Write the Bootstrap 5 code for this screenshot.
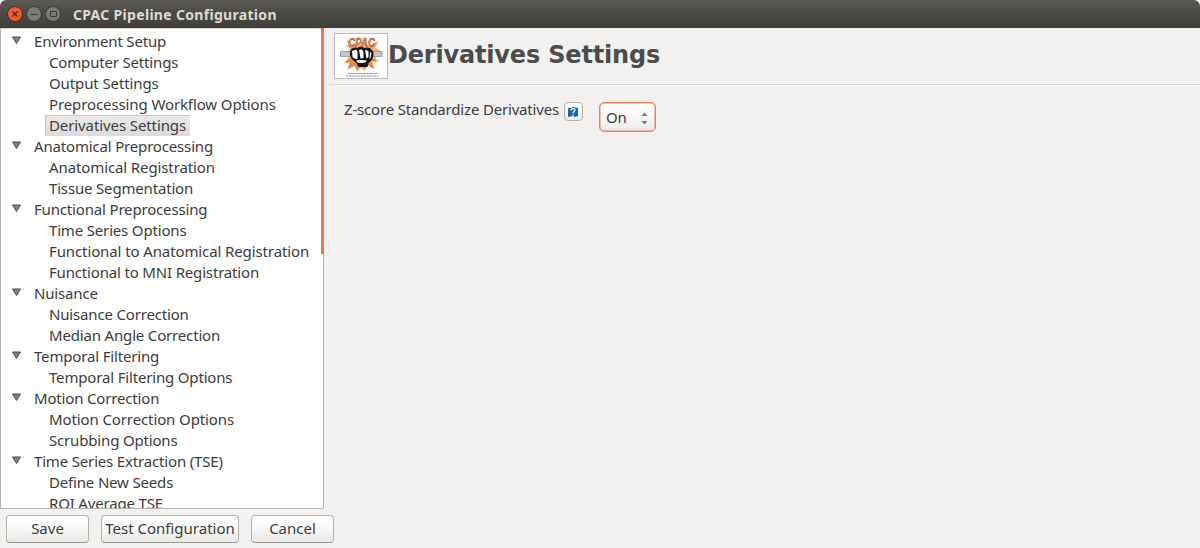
<!DOCTYPE html>
<html lang="en">
<head>
<meta charset="utf-8">
<title>CPAC Pipeline Configuration</title>
<link href="https://cdn.jsdelivr.net/npm/bootstrap@5.3.0/dist/css/bootstrap.min.css" rel="stylesheet">
<style>
body{font:15px/21px "Noto Sans","Open Sans",sans-serif;color:#3c3c3c;background:#f2f1f0;height:548px;letter-spacing:-.17px}
.titlebar{height:28px;padding-left:7px;background:linear-gradient(#5c5a54,#504e48 35%,#3f3e39);border-radius:6px 6px 0 0;color:#dfdbd2;font-weight:700;font-size:14px;letter-spacing:.31px}
.frame-top{background:#fff}
.titlebar svg{margin-right:3px}
.titlebar span{margin-left:9px;line-height:28px;padding-top:1px}
.sidebar{width:324px;height:481px;background:#fff;border:1px solid #b9b5b0;border-top-color:#d8d5d1;padding-top:2px;overflow:hidden}
.group,.leaf{height:21px;white-space:nowrap}
.group{padding-left:11px}
.group svg{margin-right:12px;margin-top:-4px}
.leaf{padding-left:44px}
.leaf span{display:inline-block;height:21px;padding:0 4px}
.leaf .selected{background:linear-gradient(#ebeae8,#dddbd9);box-shadow:inset 1px 1px #cbc9c6;letter-spacing:-.1px}
.leaf .loose{letter-spacing:-.11px}
.scroll-thumb{width:3px;height:226px;background:#f07746}
.sidebar-wrap{height:481px}
.heading{height:57px;margin-left:5px;padding:0 0 0 5px;border-bottom:1px solid #d9d7d5;box-shadow:0 1px #f9f8f7}
.heading h1{font:bold 24px/28px "DejaVu Sans",sans-serif;letter-spacing:-.18px;color:#4c4c4c;margin:0 0 2px}
.setting{padding:17px 0 0 20px}
.setting label{height:21px;margin-top:-3px;letter-spacing:-.18px}
.help{width:19px;height:19px;border:1px solid #b3afab;border-radius:4px;background:linear-gradient(#fff,#efeeed);margin:0 16px 0 5px}
.choice{width:57px;height:30px;border:1.5px solid #ea8358;border-radius:5px;background:linear-gradient(#fff,#f7f6f6 60%,#eae9e8);padding:0 7px 0 6px;box-shadow:inset 0 0 0 .5px #ea8358}
.choice svg{margin-top:3px}
.footer-bar{height:39px;padding:6px 0 0 6px;gap:12px}
.footer-bar .btn{--bs-btn-color:#3c3c3c;height:28px;padding:0 0 2px;border:1px solid #b5b1ad;border-bottom-color:#9c9894;border-radius:4px;background:linear-gradient(#fff,#f8f8f7 50%,#eae8e7);font-size:15px;line-height:24px}
.w-save{width:83px}.w-test{width:138px}
</style>
</head>
<body class="overflow-hidden">
<div class="frame-top"><header class="titlebar d-flex align-items-center">
<svg width="16" height="16" viewBox="0 0 16 16"><circle cx="8" cy="8" r="7.5" fill="#ed5d2f" stroke="#35342f"/><path d="M5.500 5.500l5 5m0-5l-5 5" stroke="#46271b" stroke-width="1.2"/></svg>
<svg width="16" height="16" viewBox="0 0 16 16"><circle cx="8" cy="8" r="7.5" fill="#7c7a73" stroke="#383732"/><path d="M4.500 8.500h7" stroke="#393832"/></svg>
<svg width="16" height="16" viewBox="0 0 16 16"><circle cx="8" cy="8" r="7.5" fill="#7c7a73" stroke="#383732"/><path d="M5.500 5.500h6v5h-6z" fill="none" stroke="#393832"/></svg>
<span>CPAC Pipeline Configuration</span>
</header></div>
<svg class="d-none"><defs><g id="open"><path d="M.5 1h8l-4 6.500z" fill="#818181" stroke="#4b4b4b"/></g></defs></svg>
<div class="d-flex">
<div class="sidebar-wrap position-relative flex-shrink-0">
<nav class="sidebar">
<div class="group"><svg width="10" height="9"><use href="#open"/></svg>Environment Setup</div>
<div class="leaf"><span>Computer Settings</span></div>
<div class="leaf"><span class="loose">Output Settings</span></div>
<div class="leaf"><span class="loose">Preprocessing Workflow Options</span></div>
<div class="leaf"><span class="selected">Derivatives Settings</span></div>
<div class="group"><svg width="10" height="9"><use href="#open"/></svg>Anatomical Preprocessing</div>
<div class="leaf"><span class="loose">Anatomical Registration</span></div>
<div class="leaf"><span>Tissue Segmentation</span></div>
<div class="group"><svg width="10" height="9"><use href="#open"/></svg>Functional Preprocessing</div>
<div class="leaf"><span>Time Series Options</span></div>
<div class="leaf"><span class="loose">Functional to Anatomical Registration</span></div>
<div class="leaf"><span>Functional to MNI Registration</span></div>
<div class="group"><svg width="10" height="9"><use href="#open"/></svg>Nuisance</div>
<div class="leaf"><span>Nuisance Correction</span></div>
<div class="leaf"><span>Median Angle Correction</span></div>
<div class="group"><svg width="10" height="9"><use href="#open"/></svg>Temporal Filtering</div>
<div class="leaf"><span>Temporal Filtering Options</span></div>
<div class="group"><svg width="10" height="9"><use href="#open"/></svg>Motion Correction</div>
<div class="leaf"><span class="loose">Motion Correction Options</span></div>
<div class="leaf"><span>Scrubbing Options</span></div>
<div class="group"><svg width="10" height="9"><use href="#open"/></svg>Time Series Extraction (TSE)</div>
<div class="leaf"><span>Define New Seeds</span></div>
<div class="leaf"><span>ROI Average TSE</span></div>
</nav>
<div class="scroll-thumb position-absolute top-0 end-0"></div>
</div>
<main class="flex-grow-1">
<div class="heading d-flex align-items-center">
<svg width="54" height="46" viewBox="0 0 54 46"><path d="M.5.5h53v45H.5z" fill="#fff" stroke="#b9b9b9"/>
<path d="M13 7l6 5h18l8-5-4 8 5 2-5 7 4 5-7-1 3 8-8-4-2 6-4-3-4 4-2-6-8 4 3-8-6 1 5-6-5-4 6-3z" fill="#f6b27c"/>
<path d="M12 12l6 4M42 9l-5 6M16 26l-4 3 5 0-2 6 6-4 2 5 3-5M37 25l5 3-6 0 3 7-7-5-1 5-3-4" fill="#ee8a48" stroke="#d9692f" stroke-width=".7"/>
<path d="M6.500 18.500h12v5h-12zM37 18.500h11v5H37z" fill="#c2c5c7" stroke="#888" stroke-width=".7"/>
<path d="M16.500 17c2-3 5-3 7-2 3-2 5-1 7 0 3-1 6-1 7 2 3 1 2 6 1 9l-4 4-1 4h-9l-2-4-5-4c-2-3-2-7-1-9z" fill="#151515"/>
<path d="M18 18l4-1.500 1.500 2v7l-2 .5-3-2zM25 17l3-.5 1.500 2.500v6l-3 .5zM31 17l3.500 1v6l-2 1.500zM36 19l1.500 1-1 5-1 1z" fill="#fff"/>
<path d="M22 27.500l5-.5 6 .5-2 2-3 .5h-4z" fill="#fff"/>
<text x="14" y="13.500" textLength="27" lengthAdjust="spacingAndGlyphs" font-family="Liberation Sans" font-size="12" font-weight="700" font-style="italic" fill="#e8883c" stroke="#853f1a" stroke-width=".4">CPAC</text>
<path d="M14 40.500h29M12 43h33" stroke="#888" stroke-width="1" stroke-dasharray="2 .6 3 .5"/></svg>
<h1>Derivatives Settings</h1>
</div>
<div class="setting d-flex align-items-start">
<label for="zscore">Z-score Standardize Derivatives</label>
<div class="help d-flex align-items-center justify-content-center"><svg width="10" height="10" viewBox="0 0 10 10"><path d="M0 1h3l2-1 4 1 1-1v9l-3 1-2-1-5 1z" fill="#1768a6"/><path d="M3 3.500C3 1 7 1 7 3c0 1.500-2 1.500-2 3.300M5 7.500v1.300" fill="none" stroke="#fff" stroke-width="1.200"/></svg></div>
<div id="zscore" class="choice d-flex align-items-center justify-content-between" role="button">On<svg width="7" height="13" viewBox="0 0 7 13"><path d="M.5 4l3-3.500 3 3.500zM.5 9h6l-3 3.500z" fill="#777"/></svg></div>
</div>
</main>
</div>
<footer class="footer-bar d-flex">
<button class="btn w-save">Save</button><button class="btn w-test">Test Configuration</button><button class="btn w-save">Cancel</button>
</footer>
<script src="https://cdn.jsdelivr.net/npm/bootstrap@5.3.0/dist/js/bootstrap.bundle.min.js"></script>
</body>
</html>
